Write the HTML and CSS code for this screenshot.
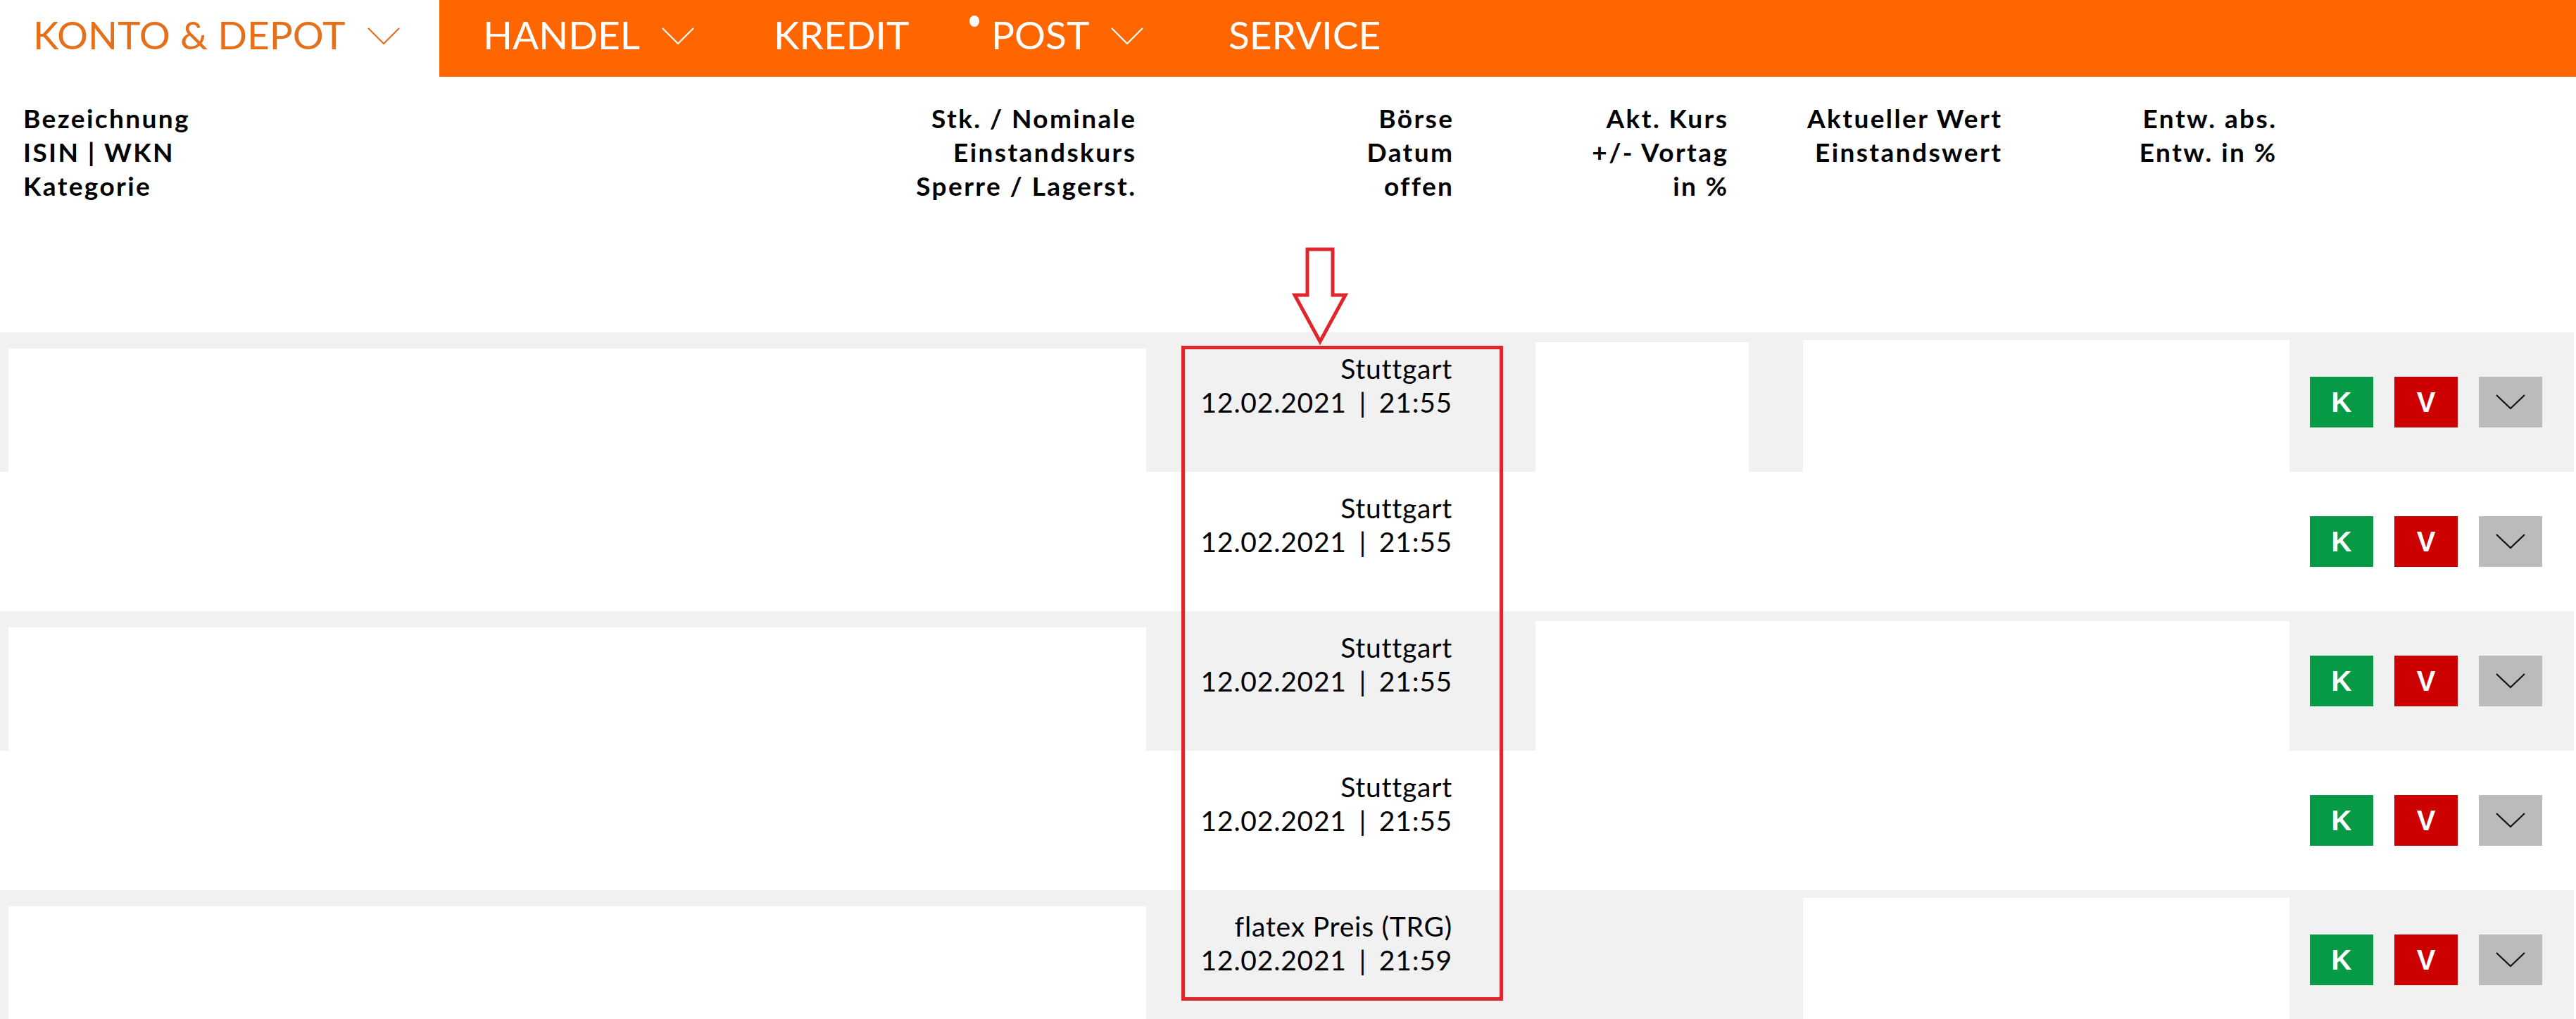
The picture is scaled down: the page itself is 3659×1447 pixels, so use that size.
FILE: index.html
```html
<!DOCTYPE html>
<html lang="de">
<head>
<meta charset="utf-8">
<title>Depotübersicht</title>
<link rel="stylesheet" href="styles.css">
</head>
<body>
<nav class="topnav">
  <div class="nav-home">
    <span class="nav-label">KONTO &amp; DEPOT</span>
    <svg class="chev" viewBox="0 0 46 24" width="46" height="24"><polyline points="1,1 23,23 45,1"/></svg>
  </div>
  <div class="nav-main">
    <div class="nav-item item-handel">
      <span class="nav-label">HANDEL</span>
      <svg class="chev" viewBox="0 0 46 24" width="46" height="24"><polyline points="1,1 23,23 45,1"/></svg>
    </div>
    <div class="nav-item item-kredit"><span class="nav-label">KREDIT</span></div>
    <div class="nav-item item-post">
      <span class="nav-dot"></span>
      <span class="nav-label">POST</span>
      <svg class="chev" viewBox="0 0 46 24" width="46" height="24"><polyline points="1,1 23,23 45,1"/></svg>
    </div>
    <div class="nav-item item-service"><span class="nav-label">SERVICE</span></div>
  </div>
</nav>

<section class="depot">
  <div class="thead">
    <div class="th th-name">Bezeichnung<br>ISIN | WKN<br>Kategorie</div>
    <div class="th th-stk">Stk. / Nominale<br>Einstandskurs<br>Sperre / Lagerst.</div>
    <div class="th th-boerse">Börse<br>Datum<br>offen</div>
    <div class="th th-kurs">Akt. Kurs<br>+/- Vortag<br>in %</div>
    <div class="th th-wert">Aktueller Wert<br>Einstandswert</div>
    <div class="th th-entw">Entw. abs.<br>Entw. in %</div>
  </div>

  <div class="tbody">
    <div class="row row-alt">
      <div class="mask mask-a"></div>
      <div class="cell-boerse"><span>Stuttgart</span><span class="ts">12.02.2021 | 21:55</span></div>
      <div class="mask mask-b"></div>
      <div class="mask mask-c"></div>
      <div class="actions">
        <button class="btn btn-buy">K</button>
        <button class="btn btn-sell">V</button>
        <button class="btn btn-more"><svg viewBox="0 0 42 22" width="42" height="22"><polyline points="1,1 21,20 41,1"/></svg></button>
      </div>
    </div>
    <div class="row">
      <div class="cell-boerse"><span>Stuttgart</span><span class="ts">12.02.2021 | 21:55</span></div>
      <div class="actions">
        <button class="btn btn-buy">K</button>
        <button class="btn btn-sell">V</button>
        <button class="btn btn-more"><svg viewBox="0 0 42 22" width="42" height="22"><polyline points="1,1 21,20 41,1"/></svg></button>
      </div>
    </div>
    <div class="row row-alt">
      <div class="mask mask-a"></div>
      <div class="cell-boerse"><span>Stuttgart</span><span class="ts">12.02.2021 | 21:55</span></div>
      <div class="mask mask-bc"></div>
      <div class="actions">
        <button class="btn btn-buy">K</button>
        <button class="btn btn-sell">V</button>
        <button class="btn btn-more"><svg viewBox="0 0 42 22" width="42" height="22"><polyline points="1,1 21,20 41,1"/></svg></button>
      </div>
    </div>
    <div class="row">
      <div class="cell-boerse"><span>Stuttgart</span><span class="ts">12.02.2021 | 21:55</span></div>
      <div class="actions">
        <button class="btn btn-buy">K</button>
        <button class="btn btn-sell">V</button>
        <button class="btn btn-more"><svg viewBox="0 0 42 22" width="42" height="22"><polyline points="1,1 21,20 41,1"/></svg></button>
      </div>
    </div>
    <div class="row row-alt">
      <div class="mask mask-a"></div>
      <div class="cell-boerse"><span>flatex Preis (TRG)</span><span class="ts">12.02.2021 | 21:59</span></div>
      <div class="mask mask-c"></div>
      <div class="actions">
        <button class="btn btn-buy">K</button>
        <button class="btn btn-sell">V</button>
        <button class="btn btn-more"><svg viewBox="0 0 42 22" width="42" height="22"><polyline points="1,1 21,20 41,1"/></svg></button>
      </div>
    </div>
  </div>
</section>

<svg class="anno-arrow" viewBox="0 0 82 140" width="82" height="140"><polygon points="23,4 59,4 59,69 77,69 41,135 5,69 23,69"/></svg>
<div class="anno-box"></div>
</body>
</html>
```

FILE: styles.css
```css
html, body {
  margin: 0;
  padding: 0;
  background: #ffffff;
}

body {
  position: relative;
  width: 3659px;
  min-height: 1447px;
  overflow: hidden;
  font-family: "Lato", "Open Sans", "Liberation Sans", sans-serif;
  color: #000;
}

/* ---------- top navigation ---------- */
.topnav {
  display: flex;
  height: 109px;
}

.nav-home {
  flex: none;
  width: 624px;
  box-sizing: border-box;
  padding-left: 47px;
  display: flex;
  align-items: center;
  gap: 31px;
  color: #e5701c;
  padding-bottom: 10px;
}

.nav-main {
  flex: 1;
  background: #ff6600;
  display: flex;
  align-items: center;
  padding-left: 62px;
  padding-bottom: 10px;
  color: #ffffff;
}

.nav-label {
  font-size: 55px;
  font-weight: 400;
  line-height: 1;
  white-space: nowrap;
}

.nav-item {
  flex: none;
  display: flex;
  align-items: center;
  gap: 31px;
  position: relative;
}

.item-handel { width: 413px; }
.item-kredit { width: 309px; }
.item-post { width: 337px; }

.chev {
  flex: none;
  margin-top: 2px;
}

.chev polyline {
  fill: none;
  stroke: currentColor;
  stroke-width: 2.2;
}

.nav-dot {
  position: absolute;
  left: -31px;
  top: 0;
  width: 14px;
  height: 16px;
  border-radius: 50%;
  background: #ffffff;
}

/* ---------- table header ---------- */
.thead {
  display: grid;
  grid-template-columns: 33px 1000px 579px 451px 390px 389px 390px 1fr;
  padding-top: 35px;
  height: 363px;
  box-sizing: border-box;
}

.th {
  font-size: 37px;
  font-weight: 700;
  line-height: 48px;
  letter-spacing: 0.065em;
  white-space: nowrap;
}

.th-stk,
.th-boerse,
.th-kurs,
.th-wert,
.th-entw {
  text-align: right;
  margin-right: -0.065em;
}

.th-name { grid-column: 2; }
.th-stk { grid-column: 3; }
.th-boerse { grid-column: 4; }
.th-kurs { grid-column: 5; }
.th-wert { grid-column: 6; }
.th-entw { grid-column: 7; }

/* ---------- rows ---------- */
.tbody {
  width: 3656px;
}

.row {
  display: grid;
  grid-template-columns: 12px 1616px 553px 303px 77px 691px 1fr;
  height: 198px;
}

.row-alt {
  background: #f1f1f1;
}

.mask {
  background: #ffffff;
}

.mask-a { grid-column: 2; margin-top: 23px; }
.mask-b { grid-column: 4; margin-top: 14px; }
.mask-c { grid-column: 6; margin-top: 11px; }
.mask-bc { grid-column: 4 / 7; margin-top: 14px; }

.cell-boerse {
  grid-column: 3;
  grid-row: 1;
  display: flex;
  flex-direction: column;
  align-items: flex-end;
  padding-top: 27px;
  padding-right: 118px;
  font-size: 39px;
  line-height: 48px;
  letter-spacing: 0.02em;
  white-space: nowrap;
}

.cell-boerse .ts {
  word-spacing: 0.18em;
}

.actions {
  grid-column: 7;
  grid-row: 1;
  display: flex;
  align-items: center;
  gap: 30px;
  padding-left: 29px;
}

.btn {
  width: 90px;
  height: 72px;
  border: 0;
  padding: 0;
  margin: 0;
  display: flex;
  align-items: center;
  justify-content: center;
  font-family: "Liberation Sans", Arial, sans-serif;
  font-size: 40px;
  font-weight: 700;
  color: #ffffff;
}

.btn-buy { background: #079a46; }
.btn-sell { background: #cc0000; }
.btn-more { background: #bbbbbb; }

.btn-more polyline {
  fill: none;
  stroke: #111111;
  stroke-width: 2.2;
}

/* ---------- annotation overlay ---------- */
.anno-arrow {
  position: absolute;
  left: 1834px;
  top: 350px;
}

.anno-arrow polygon {
  fill: #ffffff;
  stroke: #e0262d;
  stroke-width: 5;
  stroke-linejoin: miter;
}

.anno-box {
  position: absolute;
  left: 1678px;
  top: 491px;
  width: 457px;
  height: 930px;
  box-sizing: border-box;
  border: 5px solid #e0262d;
}
```
